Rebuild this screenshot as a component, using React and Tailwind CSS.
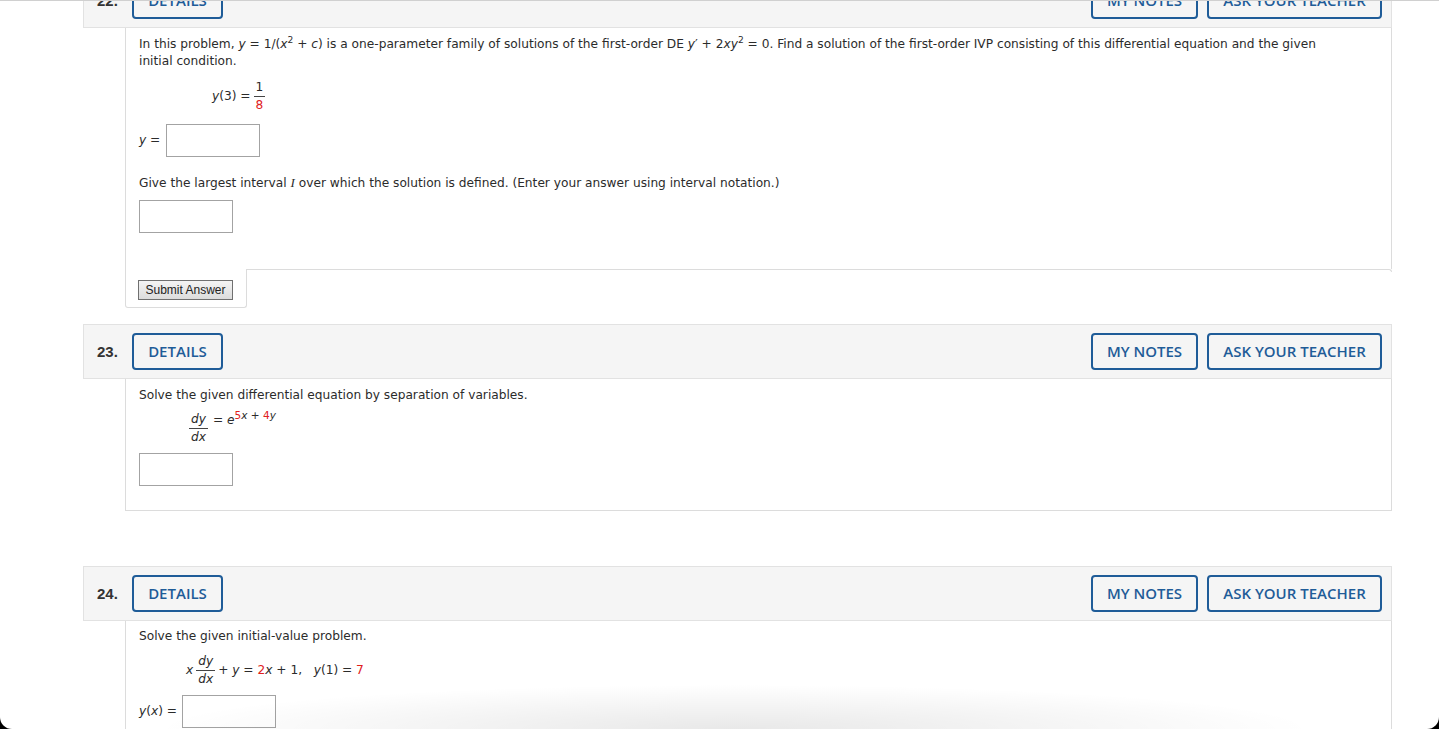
import React from "react";

const body = { fontFamily: '"DejaVu Sans", Verdana, sans-serif' };
const head = { fontFamily: '"Open Sans", "Liberation Sans", sans-serif' };

const Red = ({ children }) => <span className="text-[#e0201c]">{children}</span>;
const I = ({ children }) => <i className="italic">{children}</i>;

const Frac = ({ top, bottom }) => (
  <span className="inline-flex flex-col items-center align-middle mx-[3px]">
    <span className="px-[2px] leading-[15px] pb-[1px]">{top}</span>
    <span className="w-full border-t border-[#444]" />
    <span className="px-[2px] leading-[15px] pt-[1px]">{bottom}</span>
  </span>
);

const AnswerBox = ({ className = "" }) => (
  <div className={`w-[94px] h-[33px] border border-[#a3a3a3] bg-white ${className}`} />
);

const Header = ({ num }) => (
  <div className="flex items-center h-[55px] bg-[#f5f5f5] border border-[#e2e2e2] pl-[13px] pr-[9px]" style={head}>
    <span className="w-[35px] text-[15px] font-bold text-[#333]" style={{ fontFamily: '"Liberation Sans", Arial, sans-serif' }}>
      {num}
    </span>
    <button className="w-[91px] h-[37px] border-2 border-[#1f5c98] rounded-[4px] text-[#1f5c98] text-[15px] font-semibold">
      DETAILS
    </button>
    <div className="flex-1" />
    <button className="w-[107px] h-[37px] border-2 border-[#1f5c98] rounded-[4px] text-[#1f5c98] text-[15px] font-semibold">
      MY NOTES
    </button>
    <button className="ml-[9px] w-[175px] h-[37px] border-2 border-[#1f5c98] rounded-[4px] text-[#1f5c98] text-[15px] font-semibold">
      ASK YOUR TEACHER
    </button>
  </div>
);

export default function App() {
  return (
    <div className="relative h-[729px] overflow-hidden bg-white text-[#2b2b2b] text-[12.2px] leading-[17px]" style={body}>
      <div className="absolute top-0 left-0 right-0 h-px bg-[#d0d0d0] z-10" />

      <div className="ml-[83px] w-[1309px] mt-[-27px]">
        {/* 22 */}
        <Header num="22." />
        <div className="ml-[42px] border-x border-[#dcdcdc] px-[13px] pt-[8px] pb-[36px]">
          <p>
            In this problem, <I>y</I> = 1/(<I>x</I>
            <sup>2</sup> + <I>c</I>) is a one-parameter family of solutions of the first-order DE <I>y</I>′ + 2<I>xy</I>
            <sup>2</sup> = 0. Find a solution of the first-order IVP consisting of this differential equation and the given
            <br />
            initial condition.
          </p>
          <div className="mt-[10px] ml-[73px] flex items-center h-[32px]">
            <span>
              <I>y</I>(3) =
            </span>
            <Frac top="1" bottom={<Red>8</Red>} />
          </div>
          <div className="mt-[12px] flex items-center">
            <span className="mr-[6px]">
              <I>y</I> =
            </span>
            <AnswerBox />
          </div>
          <p className="mt-[17px]">
            Give the largest interval{" "}
            <span style={{ fontFamily: '"Liberation Serif", serif' }} className="italic text-[13px]">
              I
            </span>{" "}
            over which the solution is defined. (Enter your answer using interval notation.)
          </p>
          <AnswerBox className="mt-[8px]" />
        </div>
        <div className="ml-[42px] flex">
          <div className="w-[122px] h-[39px] border-x border-b border-[#dcdcdc] rounded-b-[3px] pl-[12px] pt-[11px]">
            <button
              className="h-[20px] w-[95px] border border-[#707070] bg-gradient-to-b from-[#f4f4f4] to-[#dcdcdc] text-[12px] text-[#222]"
              style={{ fontFamily: '"Liberation Sans", Arial, sans-serif' }}
            >
              Submit Answer
            </button>
          </div>
          <div className="flex-1 border-t border-r border-[#dcdcdc] h-[3px] rounded-tr-[3px] -ml-px" />
        </div>

        {/* 23 */}
        <div className="mt-[16px]">
          <Header num="23." />
          <div className="ml-[42px] border-x border-b border-[#dcdcdc] px-[13px] pt-[8px] pb-[24px]">
            <p>Solve the given differential equation by separation of variables.</p>
            <div className="mt-[7px] ml-[47px] flex items-center h-[35px]">
              <Frac top={<I>dy</I>} bottom={<I>dx</I>} />
              <span className="ml-[2px] self-start mt-[1px]">
                = <I>e</I>
                <sup className="text-[10.5px]">
                  <Red>5</Red>
                  <I>x</I> + <Red>4</Red>
                  <I>y</I>
                </sup>
              </span>
            </div>
            <AnswerBox className="mt-[7px]" />
          </div>
        </div>

        {/* 24 */}
        <div className="mt-[55px]">
          <Header num="24." />
          <div className="ml-[42px] border-x border-[#dcdcdc] px-[13px] pt-[7px] pb-[40px]">
            <p>Solve the given initial-value problem.</p>
            <div className="mt-[8px] ml-[47px] flex items-center h-[34px]">
              <I>x</I>
              <Frac top={<I>dy</I>} bottom={<I>dx</I>} />
              <span className="whitespace-pre">
                + <I>y</I> = <Red>2</Red>
                <I>x</I> + 1,{"   "}
                <I>y</I>(1) = <Red>7</Red>
              </span>
            </div>
            <div className="mt-[8px] flex items-center">
              <span className="mr-[5px]">
                <I>y</I>(<I>x</I>) =
              </span>
              <AnswerBox />
            </div>
          </div>
        </div>
      </div>

      <div className="pointer-events-none absolute bottom-0 left-[150px] right-[120px] h-[45px] bg-[radial-gradient(ellipse_at_bottom,rgba(0,0,0,0.09),rgba(0,0,0,0)_70%)]" />
      <div className="absolute bottom-0 left-0 w-[12px] h-[12px] bg-black">
        <div className="w-full h-full bg-white rounded-bl-[12px]" />
      </div>
      <div className="absolute bottom-0 right-0 w-[12px] h-[12px] bg-black">
        <div className="w-full h-full bg-white rounded-br-[12px]" />
      </div>
    </div>
  );
}
